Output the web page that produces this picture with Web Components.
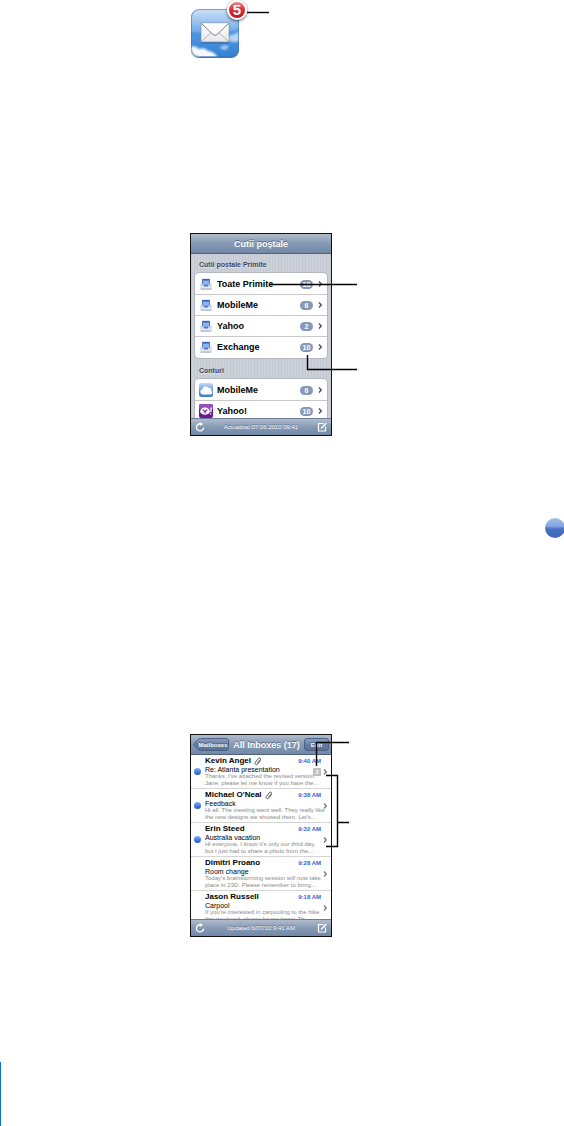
<!DOCTYPE html>
<html lang="ro">
<head>
<meta charset="utf-8">
<meta name="viewport" content="width=device-width, initial-scale=1">
<title>Mail</title>
<style>
  body {
    margin: 0;
    background: #fff;
    color: #000;
    font-family: "Liberation Sans", Arial, sans-serif;
  }
</style>
</head>
<body>
<mail-guide></mail-guide>

<script>
const chevron = `
  <svg class="chevron" viewBox="0 0 5 8" width="5" height="8" aria-hidden="true">
    <path d="M1 1.500l2.300 2.500L1 6.500" fill="none" stroke="currentColor" stroke-width="1.300"/>
  </svg>`;

const ROW_ICONS = {
  inbox: `
    <path d="M1 7h12v6.500H1z" fill="#e9edf5" stroke="#b4bdcc" stroke-width=".6"/>
    <path d="M2.500 1h9v6.500h-9z" fill="#3563b8"/>
    <path d="M3.500 3h7v4.500h-7z" fill="#8db4ee"/>
    <path d="M1 7.500h3l1 1.500h4l1-1.500h3V10H1z" fill="#c3d3ee"/>
    <path d="M4 8h6l-1 2H5z" fill="#4a79cc"/>
    <path d="M1 12.800h12" stroke="#9aa5b8"/>`,
  mobileme: `
    <defs>
      <linearGradient id="sky" x2="0" y2="1">
        <stop stop-color="#c3daf2"/><stop offset=".5" stop-color="#6c9fd8"/><stop offset="1" stop-color="#3f7cc2"/>
      </linearGradient>
    </defs>
    <rect width="14" height="14" rx="2.5" fill="url(#sky)"/>
    <path d="M3.500 11.500a2.800 2.800 0 010-5.500A3.400 3.400 0 019.400 4.800a2.800 2.800 0 013 2.900 2.200 2.200 0 01-.5 3.800z" fill="#fff"/>`,
  yahoo: `
    <rect width="14" height="14" rx="2" fill="#6b1790"/>
    <path d="M0 2a2 2 0 012-2h10a2 2 0 012 2v3Q7 7 0 5z" fill="#9450b4"/>
    <ellipse cx="6" cy="7.2" rx="4.8" ry="3.6" fill="#fff"/>
    <path d="M3.7 5.6L6 7.6l2.3-2M6 7.6v2" fill="none" stroke="#6b1790" stroke-width="1.2"/>
    <path d="M12.200 3.500l-.4 4.600M11.600 9.300v1.200" stroke="#fff" stroke-width="1.300"/>`
};

class AppIcon extends HTMLElement {
  constructor() {
    super();
    this.attachShadow({ mode: "open" });
    this.shadowRoot.innerHTML = `
      <style>
        :host { display: block; position: relative; width: 50px; height: 50px; }
        svg { display: block; }
        .badge {
          position: absolute;
          top: -8px;
          right: -7px;
          box-sizing: border-box;
          width: 20px;
          height: 20px;
          border: 2px solid #fff;
          border-radius: 50%;
          background: linear-gradient(#e88c8f, #d5323a 45%, #c4111c);
          box-shadow: 0 1px 3px rgba(0, 0, 0, .7);
          color: #fff;
          font-size: 15px;
          font-weight: bold;
          line-height: 16px;
          text-align: center;
        }
      </style>
      <svg viewBox="0 0 50 50" width="50" height="50" role="img" aria-label="Mail">
        <defs>
          <linearGradient id="bg" x2="0" y2="1">
            <stop stop-color="#c6ddf6"/><stop offset=".25" stop-color="#8fbcee"/>
            <stop offset=".5" stop-color="#4f97e4"/><stop offset="1" stop-color="#3580d2"/>
          </linearGradient>
          <linearGradient id="paper" x2="0" y2="1">
            <stop stop-color="#fff"/><stop offset="1" stop-color="#e6e7e9"/>
          </linearGradient>
          <filter id="soft"><feGaussianBlur stdDeviation="1"/></filter>
          <clipPath id="tile"><rect x="1" y="1" width="48" height="48" rx="8"/></clipPath>
        </defs>
        <rect x="1" y="2" width="48" height="48" rx="8" fill="#3d4c60" opacity=".8"/>
        <g clip-path="url(#tile)">
          <rect x="1" y="1" width="48" height="48" fill="url(#bg)"/>
          <path d="M0 0h50v20Q25 29 0 23z" fill="#fff" opacity=".14"/>
          <g fill="#fff" filter="url(#soft)">
            <path d="M0 39q5-2 9 2 6-2 9 2 6 0 10 7H0z" opacity=".95"/>
            <path d="M36 31q4-5 7-4 4-3 7-2v8q-8 3-14-2z" opacity=".6"/>
            <path d="M30 39q5-3 9-1l-3 4q-5 0-6-3z" opacity=".55"/>
          </g>
        </g>
        <rect x="1.5" y="1.5" width="47" height="47" rx="8" fill="none" stroke="#3871b2" opacity=".6"/>
        <rect x="11" y="16" width="28" height="19.5" fill="#285b96" opacity=".6"/>
        <rect x="11" y="15" width="28" height="19" fill="url(#paper)" stroke="#7a8796" stroke-width=".6"/>
        <path d="M11.5 33.5l9.7-9M38.500 33.500l-9.700-9" stroke="#a0a5ab" stroke-width=".8"/>
        <path d="M11.500 15.500L23 26.500q2 1.600 4 0l11.500-11" fill="#fff" stroke="#6c7279" stroke-width=".9"/>
      </svg>
      <span class="badge"><slot></slot></span>
    `;
  }
}
customElements.define("app-icon", AppIcon);

// Leader lines that lie over a figure, in the figure's own pixels.
class CalloutLines extends HTMLElement {
  constructor() {
    super();
    this.attachShadow({ mode: "open" });
  }

  connectedCallback() {
    this.shadowRoot.innerHTML = `
      <style>
        :host { position: absolute; top: 0; left: 0; pointer-events: none; }
        svg { display: block; overflow: visible; }
        path { fill: none; stroke: #000; stroke-width: 1.4; }
      </style>
      <svg width="1" height="1" aria-hidden="true"><path d="${this.getAttribute("path")}"/></svg>
    `;
  }
}
customElements.define("callout-lines", CalloutLines);

class PhoneScreen extends HTMLElement {
  constructor() {
    super();
    this.attachShadow({ mode: "open" });
    this.shadowRoot.innerHTML = `
      <style>
        :host {
          display: flex;
          flex-direction: column;
          box-sizing: border-box;
          width: 142px;
          height: 203px;
          border: 1px solid #111;
          overflow: hidden;
        }
        header, footer {
          flex: none;
          display: flex;
          align-items: center;
          background: linear-gradient(#b0bccd, #8799b3 50%, #7189a8);
          color: #fff;
          text-shadow: 0 -1px 0 rgba(50, 66, 92, .6);
        }
        header {
          height: 20px;
          justify-content: center;
          border-bottom: 1px solid #4f6078;
          box-sizing: border-box;
        }
        .body { flex: 1; min-height: 0; overflow: hidden; }
        footer {
          height: 17px;
          justify-content: space-between;
          padding: 0 4px;
          border-top: 1px solid #6c7e98;
          box-sizing: border-box;
          font-size: 6px;
        }
        button {
          display: block;
          padding: 0;
          border: 0;
          background: none;
          color: inherit;
        }
        svg { display: block; }
      </style>
      <header><slot name="header"></slot></header>
      <div class="body"><slot></slot></div>
      <footer>
        <button type="button" aria-label="Refresh">
          <svg viewBox="0 0 10 10" width="10" height="10">
            <path d="M5.500 1.800A3.600 3.600 0 108.600 5.600" fill="none" stroke="#fff" stroke-width="1.300"/>
            <path d="M4.800 0l3.400 1.900-3.300 2z" fill="#fff"/>
          </svg>
        </button>
        <slot name="status"></slot>
        <button type="button" aria-label="Compose">
          <svg viewBox="0 0 10 10" width="10" height="10">
            <path d="M6.500 1.500h-5v7.500h7V4.500" fill="none" stroke="#fff" stroke-width="1.200"/>
            <path d="M4 6.500L9.300 1" stroke="#fff" stroke-width="1.500"/>
          </svg>
        </button>
      </footer>
    `;
  }
}
customElements.define("phone-screen", PhoneScreen);

class MailboxRow extends HTMLElement {
  constructor() {
    super();
    this.attachShadow({ mode: "open" });
  }

  connectedCallback() {
    this.shadowRoot.innerHTML = `
      <style>
        :host { display: block; }
        :host(:not(:last-child)) { border-bottom: 1px solid #c6c8cb; }
        a {
          display: flex;
          align-items: center;
          height: 20px;
          padding: 0 4px;
          color: #000;
          text-decoration: none;
        }
        .icon { flex: none; margin-right: 4px; }
        .name { flex: 1; font-size: 9px; font-weight: bold; white-space: nowrap; }
        .count {
          min-width: 13px;
          height: 9px;
          margin-right: 5px;
          border-radius: 5px;
          background: #8797b8;
          color: #fff;
          font-size: 7px;
          font-weight: bold;
          line-height: 9px;
          text-align: center;
        }
        .chevron { color: #4c4c4c; }
      </style>
      <a href="#">
        <svg class="icon" viewBox="0 0 14 14" width="14" height="${this.getAttribute("icon") === "inbox" ? 12 : 14}" aria-hidden="true">${ROW_ICONS[this.getAttribute("icon")]}</svg>
        <span class="name"><slot></slot></span>
        <span class="count">${this.getAttribute("count")}</span>
        ${chevron}
      </a>
    `;
  }
}
customElements.define("mailbox-row", MailboxRow);

class MailboxGroup extends HTMLElement {
  constructor() {
    super();
    this.attachShadow({ mode: "open" });
    this.shadowRoot.innerHTML = `
      <style>
        :host { display: block; padding: 0 4px 2px; }
        h2 {
          margin: 0;
          padding: 5px 4px 2px;
          color: #3f485a;
          font-size: 7px;
          font-weight: bold;
          line-height: 12px;
          text-shadow: 0 1px 0 #e4e7ec;
        }
        .card {
          padding: 1px 0;
          border-radius: 4px;
          background: #fff;
          box-shadow: 0 0 0 1px #b3b8c0;
        }
      </style>
      <h2><slot name="title"></slot></h2>
      <div class="card"><slot></slot></div>
    `;
  }
}
customElements.define("mailbox-group", MailboxGroup);

class MailboxesScreen extends HTMLElement {
  constructor() {
    super();
    this.attachShadow({ mode: "open" });
    this.shadowRoot.innerHTML = `
      <style>
        :host { display: block; }
        h1 { margin: 0; font-size: 9px; font-weight: bold; line-height: 12px; }
        .list {
          display: flow-root;
          min-height: 100%;
          background: repeating-linear-gradient(90deg, #c3c8d1 0 1px, #ccd1d9 1px 3px);
        }
      </style>
      <phone-screen>
        <h1 slot="header">Cutii poștale</h1>
        <div class="list">
          <mailbox-group>
            <span slot="title">Cutii poștale Primite</span>
            <mailbox-row icon="inbox" count="18">Toate Primite</mailbox-row>
            <mailbox-row icon="inbox" count="6">MobileMe</mailbox-row>
            <mailbox-row icon="inbox" count="2">Yahoo</mailbox-row>
            <mailbox-row icon="inbox" count="10">Exchange</mailbox-row>
          </mailbox-group>
          <mailbox-group>
            <span slot="title">Conturi</span>
            <mailbox-row icon="mobileme" count="6">MobileMe</mailbox-row>
            <mailbox-row icon="yahoo" count="10">Yahoo!</mailbox-row>
          </mailbox-group>
        </div>
        <span slot="status">Actualizat 07.06.2010 09:41</span>
      </phone-screen>
    `;
  }
}
customElements.define("mailboxes-screen", MailboxesScreen);

class MessageRow extends HTMLElement {
  constructor() {
    super();
    this.attachShadow({ mode: "open" });
  }

  connectedCallback() {
    const thread = this.getAttribute("thread");
    this.shadowRoot.innerHTML = `
      <style>
        :host { display: block; border-bottom: 1px solid #d5d5d5; }
        a {
          display: grid;
          grid-template-columns: 14px 1fr auto;
          align-items: center;
          height: 33px;
          color: #000;
          text-decoration: none;
        }
        .dot {
          width: 7px;
          height: 7px;
          margin-left: 3px;
          border-radius: 50%;
          background: linear-gradient(#7fb0f0, #1e56c8);
        }
        .text { grid-column: 2 / 4; grid-row: 1; min-width: 0; white-space: nowrap; }
        .top { display: flex; align-items: center; height: 10px; padding-right: 10px; }
        .from { font-size: 8px; font-weight: bold; line-height: 10px; }
        .clip { margin-left: 3px; }
        time { margin-left: auto; color: #2a66d8; font-size: 6px; font-weight: bold; }
        .subject { font-size: 7px; line-height: 7px; }
        .preview { color: #8a8a8a; font-size: 6px; line-height: 7px; }
        .end {
          grid-column: 3;
          grid-row: 1;
          display: flex;
          align-items: center;
          gap: 2px;
          padding-right: 3px;
        }
        .thread {
          min-width: 8px;
          border-radius: 1px;
          background: #b9bec6;
          color: #fff;
          font-size: 6px;
          font-weight: bold;
          line-height: 8px;
          text-align: center;
        }
        .chevron { color: #777; }
      </style>
      <a href="#">
        <span>${this.hasAttribute("unread") ? '<div class="dot"></div>' : ""}</span>
        <div class="text">
          <div class="top">
            <span class="from">${this.getAttribute("from")}</span>
            ${this.hasAttribute("attachment") ? `
              <svg class="clip" viewBox="0 0 8 9" width="8" height="9" role="img" aria-label="Attachment">
                <path d="M6.500 3.500L3.600 7.200a1.500 1.500 0 01-2.300-1.900L4.600 1.400a1.100 1.100 0 011.700 1.400L3.400 6.200" fill="none" stroke="#555" stroke-width="1"/>
              </svg>` : ""}
            <time>${this.getAttribute("time")}</time>
          </div>
          <div class="subject">${this.getAttribute("subject")}</div>
          <div class="preview"><slot></slot></div>
        </div>
        <div class="end">${thread ? `<span class="thread">${thread}</span>` : ""}${chevron}</div>
      </a>
    `;
  }
}
customElements.define("message-row", MessageRow);

class InboxScreen extends HTMLElement {
  constructor() {
    super();
    this.attachShadow({ mode: "open" });
    this.shadowRoot.innerHTML = `
      <style>
        :host { display: block; }
        .bar {
          flex: 1;
          display: flex;
          align-items: center;
          justify-content: space-between;
          padding: 0 2px;
        }
        h1 { margin: 0; font-size: 9px; font-weight: bold; line-height: 12px; white-space: nowrap; }
        button {
          height: 13px;
          padding: 0;
          border: 1px solid #4c6182;
          border-radius: 3px;
          background: linear-gradient(#8ea2c0, #647da3 50%, #56719a);
          color: #fff;
          font: bold 6px "Liberation Sans", Arial, sans-serif;
          text-shadow: inherit;
        }
        .back {
          position: relative;
          width: 36px;
          padding-left: 4px;
          border: 0;
          background: none;
        }
        .back svg { position: absolute; inset: 0; z-index: -1; }
        .back { z-index: 0; }
        .edit { width: 25px; }
        .list { min-height: 100%; background: #fff; }
      </style>
      <phone-screen>
        <div class="bar" slot="header">
          <button class="back" type="button">
            <svg viewBox="0 0 36 13" width="36" height="13" aria-hidden="true">
              <defs>
                <linearGradient id="fill" x2="0" y2="1">
                  <stop stop-color="#8ea2c0"/><stop offset=".5" stop-color="#647da3"/><stop offset="1" stop-color="#56719a"/>
                </linearGradient>
              </defs>
              <path d="M.5 6.500L5 1.500Q6 .5 7.500.5H33q2.500 0 2.500 2.500v7q0 2.500-2.500 2.500H7.500q-1.500 0-2.500-1z" fill="url(#fill)" stroke="#4c6182"/>
            </svg>
            Mailboxes
          </button>
          <h1>All Inboxes (17)</h1>
          <button class="edit" type="button">Edit</button>
        </div>
        <div class="list">
          <message-row unread attachment thread="3" from="Kevin Angel" time="9:40 AM" subject="Re: Atlanta presentation">Thanks, I've attached the revised version.<br>Jane, please let me know if you have the...</message-row>
          <message-row unread attachment from="Michael O'Neal" time="9:38 AM" subject="Feedback">Hi all. The meeting went well. They really like<br>the new designs we showed them. Let's...</message-row>
          <message-row unread from="Erin Steed" time="9:32 AM" subject="Australia vacation">Hi everyone, I know it's only our third day,<br>but I just had to share a photo from the...</message-row>
          <message-row from="Dimitri Proano" time="9:28 AM" subject="Room change">Today's brainstorming session will now take<br>place in 23D. Please remember to bring...</message-row>
          <message-row from="Jason Russell" time="9:18 AM" subject="Carpool">If you're interested in carpooling to the hike<br>this weekend, please let me know. Th...</message-row>
        </div>
        <span slot="status">Updated 6/07/10 9:41 AM</span>
      </phone-screen>
    `;
  }
}
customElements.define("inbox-screen", InboxScreen);

class MailGuide extends HTMLElement {
  constructor() {
    super();
    this.attachShadow({ mode: "open" });
    this.shadowRoot.innerHTML = `
      <style>
        :host {
          display: flex;
          flex-direction: column;
          min-height: 100vh;
          box-sizing: border-box;
          padding-top: 8px;
        }
        figure { position: relative; width: fit-content; margin: 0 0 0 190px; }
        .mailboxes { margin-top: 175px; }
        .unread {
          align-self: flex-end;
          width: 20px;
          height: 20px;
          margin: 82px -1px 0 0;
          border-radius: 50%;
          background: linear-gradient(#9cc0ea, #84a8e0 40%, #4a70c4 55%, #3f66bd);
        }
        .inbox { margin-top: 196px; }
        .rule { width: 1px; height: 64px; margin-top: auto; background: #0b74cc; }
      </style>
      <figure>
        <app-icon>5</app-icon>
        <callout-lines path="M57 4.500H79"></callout-lines>
      </figure>
      <figure class="mailboxes">
        <mailboxes-screen></mailboxes-screen>
        <callout-lines path="M79 51.500H167M117.500 122V136.500H167"></callout-lines>
      </figure>
      <div class="unread"></div>
      <figure class="inbox">
        <inbox-screen></inbox-screen>
        <callout-lines path="M159 8.500H126.500V32M136 41.500H147.500V112.500H136M147 88.500H159"></callout-lines>
      </figure>
      <div class="rule"></div>
    `;
  }
}
customElements.define("mail-guide", MailGuide);
</script>
</body>
</html>
